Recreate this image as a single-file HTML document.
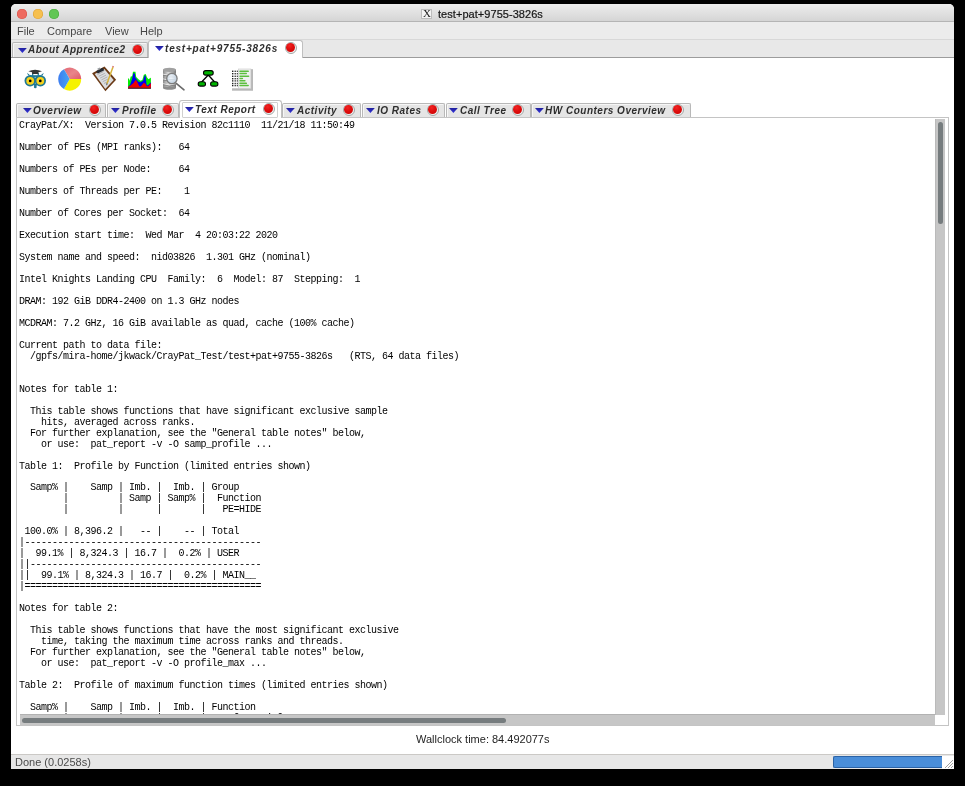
<!DOCTYPE html>
<html><head><meta charset="utf-8">
<style>
*{margin:0;padding:0;box-sizing:border-box}
html,body{width:965px;height:786px;overflow:hidden;background:#000}
body{position:relative;font-family:"Liberation Sans",sans-serif}
.a{will-change:transform}
.a{position:absolute}
#win{left:11px;top:4px;width:943px;height:765px;background:#ffffff;border-radius:5px 5px 0 0;overflow:hidden}
#title{left:11px;top:4px;width:943px;height:18px;background:linear-gradient(#ededed,#d5d5d5);border-bottom:1px solid #b5b5b5;border-radius:5px 5px 0 0}
.tl{width:9.6px;height:9.6px;border-radius:50%;top:8px}
#menu{left:11px;top:22px;width:943px;height:18px;background:#ececec;border-bottom:1px solid #d8d8d8}
.mi{top:25px;font-size:11px;color:#474747;line-height:13px;white-space:nowrap}
#tabs1{left:11px;top:40px;width:943px;height:18px;background:#e8e8e8;border-bottom:1px solid #9c9c9c}
.tab{background:#e5e5e5;border:1px solid #b8b8b8;border-bottom:none;border-radius:2px 2px 0 0;box-shadow:inset 1px 1px 0 #f6f6f6}
.tabsel{background:#fff;border:1px solid #c0c0c0;border-bottom:none;border-radius:3px 3px 0 0}
.tt{font-size:10px;letter-spacing:0.5px;font-weight:bold;font-style:italic;color:#2e2e2e;line-height:13px;white-space:nowrap}
.tri{width:8.8px;height:5.1px;background:linear-gradient(#20209c,#3434dc);clip-path:polygon(0 0,100% 0,50% 100%)}
.rc{width:12px;height:12px;border-radius:50%;border:1.2px solid #a2a6a4;background:#eef2f2}
.rc::after{content:'';position:absolute;left:0.3px;top:0.3px;width:9px;height:9px;border-radius:50%;background:radial-gradient(circle at 40% 30%,#f42424 0,#e01010 40%,#c80000 100%)}
pre{font-family:"Liberation Mono",monospace;font-size:10px;letter-spacing:-0.5px;line-height:10.98px;color:#000}
.sb{background:#c6c6c6}
.th{background:#767c7e;border-radius:3px}
</style></head><body>
<div id="win" class="a"></div>
<div id="title" class="a"></div>
<div class="a tl" style="left:17px;top:8.5px;background:#ee6b60;box-shadow:inset 0 0 0 0.6px #d9554b"></div>
<div class="a tl" style="left:32.8px;top:8.5px;background:#f6c04f;box-shadow:inset 0 0 0 0.6px #dca23c"></div>
<div class="a tl" style="left:48.6px;top:8.5px;background:#62c655;box-shadow:inset 0 0 0 0.6px #4aa93f"></div>
<div class="a" style="left:421px;top:9px;width:11px;height:10px;background:#f4f4f4;border:1px solid #bdbdbd"></div>
<div class="a" style="left:422px;top:7px;width:10px;font-family:'Liberation Serif',serif;font-size:11px;line-height:13px;color:#222;text-align:center">X</div>
<div class="a" style="left:438px;top:7.5px;font-size:11px;line-height:13px;color:#161616;-webkit-text-stroke:0.2px #161616;letter-spacing:0.05px;white-space:nowrap">test+pat+9755-3826s</div>
<div id="menu" class="a"></div>
<div class="a mi" style="left:16.7px">File</div>
<div class="a mi" style="left:46.7px">Compare</div>
<div class="a mi" style="left:104.9px">View</div>
<div class="a mi" style="left:139.8px">Help</div>
<div id="tabs1" class="a"></div>
<div class="a tab" style="left:12px;top:42px;width:136px;height:15px"></div>
<div class="a tri" style="left:18px;top:48px"></div>
<div class="a tt" style="left:28.3px;top:43.13px">About Apprentice2</div>
<div class="a rc" style="left:131.70px;top:44.00px"></div>
<div class="a tabsel" style="left:148px;top:40px;width:155px;height:18px"></div>
<div class="a tri" style="left:155px;top:46.2px"></div>
<div class="a tt" style="left:165px;top:41.93px;letter-spacing:0.8px">test+pat+9755-3826s</div>
<div class="a rc" style="left:284.60px;top:42.10px"></div>
<svg class="a" style="left:0;top:0" width="965" height="120" viewBox="0 0 965 120">
<defs>
<linearGradient id="gpr" x1="0" y1="0" x2="1" y2="1"><stop offset="0" stop-color="#e36a77"/><stop offset="0.5" stop-color="#e98589"/><stop offset="1" stop-color="#e05a6a"/></linearGradient>
<linearGradient id="gpb" x1="0" y1="0" x2="1" y2="0"><stop offset="0" stop-color="#3d7df0"/><stop offset="1" stop-color="#44a4f4"/></linearGradient>
<linearGradient id="gdb" x1="0" y1="0" x2="1" y2="0"><stop offset="0" stop-color="#8a8a8a"/><stop offset="0.4" stop-color="#d8d8d8"/><stop offset="1" stop-color="#7a7a7a"/></linearGradient>
<radialGradient id="glens" cx="0.4" cy="0.4" r="0.7"><stop offset="0" stop-color="#f4f8fc"/><stop offset="1" stop-color="#b8cadb"/></radialGradient>
</defs>
<!-- owl -->
<g>
<path d="M27 72.8 L28.2 75.5 L31 76 Z M43.8 72.8 L42.6 75.5 L39.8 76 Z" fill="#1f7894"/>
<rect x="32" y="73" width="1.3" height="3.5" fill="#1f7894"/>
<rect x="37.6" y="73" width="1.3" height="3.5" fill="#1f7894"/>
<circle cx="30.1" cy="80.8" r="5.6" fill="#1f7894"/>
<circle cx="40.4" cy="80.8" r="5.6" fill="#1f7894"/>
<rect x="30" y="75.2" width="10.5" height="4" fill="#1f7894"/>
<circle cx="35.3" cy="86.9" r="1.4" fill="#1f7894"/><path d="M32 83.5 L38.6 83.5 L35.3 87 Z" fill="#1f7894"/>
<circle cx="30.2" cy="80.8" r="3.9" fill="#f7d21a"/>
<circle cx="40.3" cy="80.8" r="3.9" fill="#f7d21a"/>
<circle cx="30.2" cy="80.9" r="1.35" fill="#000"/>
<circle cx="40.3" cy="80.9" r="1.35" fill="#000"/>
<path d="M28.3 71.3 Q35 68.2 42 71.3 L38.5 72.3 L38.3 74 L32.3 74 L32 72.3 Z" fill="#343434"/>
<circle cx="35.1" cy="77.3" r="0.5" fill="#fff"/>
</g>
<!-- pie -->
<g>
<path d="M69.7 79.1 L63.95 69.14 A11.5 11.5 0 0 1 81.2 79.1 Z" fill="url(#gpr)"/>
<path d="M69.7 79.1 L81.2 79.1 A11.5 11.5 0 0 1 63.95 89.06 Z" fill="#f5f200"/>
<path d="M69.7 79.1 L63.95 89.06 A11.5 11.5 0 0 1 63.95 69.14 Z" fill="url(#gpb)"/>
</g>
<!-- clipboard -->
<g>
<path d="M104.5 66.6 L116.1 79.8 L105.4 91.3 L92.1 73.3 Z" fill="#6a3915"/>
<path d="M104.3 69 L113.7 79.9 L105.3 88.9 L94.7 73.9 Z" fill="#dcdddf"/>
<path d="M97.5 74.5 L103.5 71.5 M98.8 76.3 L104.8 73.3 M100.1 78.1 L106.1 75.1 M101.4 79.9 L107.4 76.9 M102.7 81.7 L108.7 78.7 M104 83.5 L109 81" stroke="#9c9ea2" stroke-width="0.7"/>
<path d="M96 71.2 L102.6 67.8 L104.4 70.3 L97.8 73.6 Z" fill="#262b32"/>
<path d="M97.2 68.8 L99.8 67.4 L100.9 68.8 L98.3 70.2 Z" fill="#9a9ea2"/>
<path d="M112.2 67 L113.6 67.6 L107.7 83.8 L106.3 83.2 Z" fill="#d6b23a"/>
<path d="M106.3 83.2 L107.7 83.8 L106.6 85.6 Z" fill="#3a3a3a"/>
<path d="M112.2 67 L113.6 67.6 L114 66.4 L112.6 65.8 Z" fill="#d46060"/>
</g>
<!-- area chart -->
<g transform="translate(124 64) scale(0.03817)">
<path d="M105 640 L105 380 L130 380 L150 440 L175 330 L215 320 L235 200 L300 200 L320 340 L380 400 L430 440 L480 420 L520 280 L570 260 L600 350 L640 400 L700 360 L705 360 L705 640 Z" fill="#00ee00"/>
<path d="M105 640 L105 610 L165 530 L210 400 L245 240 L280 240 L300 360 L370 460 L430 480 L500 440 L540 300 L565 300 L590 540 L620 560 L705 480 L705 640 Z" fill="#0000f0"/>
<path d="M105 640 L105 600 L160 570 L250 500 L300 420 L330 440 L400 580 L440 590 L520 490 L560 520 L600 580 L640 580 L705 500 L705 640 Z" fill="#f00000"/>
<rect x="105" y="620" width="600" height="22" fill="#303030"/>
</g>
<!-- database + magnifier -->
<g>
<rect x="163" y="69.5" width="13" height="18.5" fill="url(#gdb)"/>
<ellipse cx="169.5" cy="88" rx="6.5" ry="1.8" fill="#8c8c8c"/>
<ellipse cx="169.5" cy="69.8" rx="6.5" ry="2.1" fill="#a0a0a0"/>
<path d="M163 74.2 Q169.5 76.7 176 74.2 M163 79 Q169.5 81.5 176 79 M163 83.8 Q169.5 86.3 176 83.8" stroke="#f2f2f2" stroke-width="0.9" fill="none"/>
<path d="M163 75.1 Q169.5 77.6 176 75.1 M163 79.9 Q169.5 82.4 176 79.9 M163 84.7 Q169.5 87.2 176 84.7" stroke="#6a6a6a" stroke-width="0.6" fill="none"/>
<path d="M176.2 83.3 L184 89.8" stroke="#6a6a6a" stroke-width="1.6" stroke-linecap="round"/>
<circle cx="171.9" cy="78.5" r="5.2" fill="url(#glens)" stroke="#7c7c7c" stroke-width="1.3"/>
<path d="M168 77 L176 77 M168.5 79.5 L175.5 79.5" stroke="#c6d0da" stroke-width="0.6"/>
</g>
<!-- tree -->
<g stroke="#000" stroke-width="1.1">
<path d="M208.3 75 L201.6 82 M208.3 75 L214.6 82" stroke-width="1.3"/>
<rect x="203.5" y="70.6" width="9.7" height="4.5" rx="2.2" fill="#00b400"/>
<rect x="198.2" y="81.8" width="7.3" height="4.3" rx="2.1" fill="#00b400"/>
<rect x="210.6" y="81.8" width="7.3" height="4.3" rx="2.1" fill="#00b400"/>
</g>
<!-- report list -->
<g>
<rect x="232" y="88.3" width="21" height="2.4" fill="#b8b8b8"/>
<rect x="250.8" y="69.2" width="2.2" height="21" fill="#b8b8b8"/>
<rect x="238.5" y="69" width="12.4" height="19.4" fill="#f0f0f0" stroke="#c8c8c8" stroke-width="0.6"/>
<g fill="#5cbf3e">
<rect x="239.3" y="70.6" width="9.6" height="1.5" rx="0.7"/>
<rect x="239.3" y="72.8" width="7.7" height="1.5" rx="0.7"/>
<rect x="239.3" y="75.4" width="10" height="1.6" rx="0.7"/>
<rect x="239.3" y="77.8" width="3.8" height="1.5" rx="0.7"/>
<rect x="239.3" y="80" width="6.3" height="1.5" rx="0.7"/>
<rect x="239.3" y="82.6" width="7.7" height="1.5" rx="0.7"/>
<rect x="239.3" y="84.7" width="9.6" height="1.5" rx="0.7"/>
</g>
<g fill="#222">
<rect x="232" y="70.6" width="1.4" height="1.4"/><rect x="234.6" y="70.6" width="1.2" height="1.4"/><rect x="236.8" y="70.6" width="1" height="1.4"/>
<rect x="232" y="73" width="1.4" height="1.4"/><rect x="234.6" y="73" width="1.2" height="1.4"/><rect x="236.8" y="73" width="1" height="1.4"/>
<rect x="232" y="75.6" width="1.4" height="1.4"/><rect x="234.6" y="75.6" width="1.2" height="1.4"/><rect x="236.8" y="75.6" width="1" height="1.4"/>
<rect x="232" y="78" width="1.4" height="1.4"/><rect x="234.6" y="78" width="1.2" height="1.4"/><rect x="236.8" y="78" width="1" height="1.4"/>
<rect x="232" y="80.2" width="1.4" height="1.4"/><rect x="234.6" y="80.2" width="1.2" height="1.4"/><rect x="236.8" y="80.2" width="1" height="1.4"/>
<rect x="232" y="82.8" width="1.4" height="1.4"/><rect x="234.6" y="82.8" width="1.2" height="1.4"/><rect x="236.8" y="82.8" width="1" height="1.4"/>
<rect x="232" y="84.9" width="1.4" height="1.4"/><rect x="234.6" y="84.9" width="1.2" height="1.4"/><rect x="236.8" y="84.9" width="1" height="1.4"/>
</g>
</g>
</svg>

<div class="a tab" style="left:16.4px;top:102.6px;width:90.4px;height:14.600000000000009px"></div>
<div class="a tri" style="left:22.9px;top:107.9px"></div>
<div class="a tt" style="left:32.7px;top:104.23px">Overview</div>
<div class="a rc" style="left:88.60px;top:104.30px"></div>
<div class="a tab" style="left:107px;top:102.6px;width:71.6px;height:14.600000000000009px"></div>
<div class="a tri" style="left:111.2px;top:107.9px"></div>
<div class="a tt" style="left:121.7px;top:104.23px">Profile</div>
<div class="a rc" style="left:161.80px;top:104.30px"></div>
<div class="a tab" style="left:282px;top:102.6px;width:79px;height:14.600000000000009px"></div>
<div class="a tri" style="left:286px;top:107.9px"></div>
<div class="a tt" style="left:296.6px;top:104.23px">Activity</div>
<div class="a rc" style="left:343.30px;top:104.30px"></div>
<div class="a tab" style="left:362px;top:102.6px;width:83.39999999999998px;height:14.600000000000009px"></div>
<div class="a tri" style="left:366px;top:107.9px"></div>
<div class="a tt" style="left:376.6px;top:104.23px">IO Rates</div>
<div class="a rc" style="left:426.70px;top:104.30px"></div>
<div class="a tab" style="left:445.6px;top:102.6px;width:84.60000000000002px;height:14.600000000000009px"></div>
<div class="a tri" style="left:449.3px;top:107.9px"></div>
<div class="a tt" style="left:459.6px;top:104.23px">Call Tree</div>
<div class="a rc" style="left:511.90px;top:104.30px"></div>
<div class="a tab" style="left:530.6px;top:102.6px;width:160.39999999999998px;height:14.600000000000009px"></div>
<div class="a tri" style="left:535px;top:107.9px"></div>
<div class="a tt" style="left:545.3px;top:104.23px">HW Counters Overview</div>
<div class="a rc" style="left:672.00px;top:104.30px"></div>
<div class="a" style="left:15.6px;top:117.2px;width:933.4px;height:609px;border:1px solid #c4c4c4;border-width:1.4px 1px 1.2px 1.4px"></div>
<div class="a" style="left:180.2px;top:116.6px;width:100.5px;height:2.2px;background:#fff"></div>
<div class="a tabsel" style="left:178.9px;top:100.3px;width:102.9px;height:18.4px"></div>
<div class="a" style="left:182.4px;top:101.9px;width:96.4px;height:15.6px;border:1px solid #d0d0d0;border-radius:1px"></div>
<div class="a tri" style="left:185.2px;top:106.6px"></div>
<div class="a tt" style="left:195px;top:102.6px">Text Report</div>
<div class="a rc" style="left:263.4px;top:102.85px"></div>
<pre class="a" id="txt" style="left:19.1px;top:119.7px;width:914px;height:595px;overflow:hidden">CrayPat/X:  Version 7.0.5 Revision 82c1110  11/21/18 11:50:49

Number of PEs (MPI ranks):   64

Numbers of PEs per Node:     64

Numbers of Threads per PE:    1

Number of Cores per Socket:  64

Execution start time:  Wed Mar  4 20:03:22 2020

System name and speed:  nid03826  1.301 GHz (nominal)

Intel Knights Landing CPU  Family:  6  Model: 87  Stepping:  1

DRAM: 192 GiB DDR4-2400 on 1.3 GHz nodes

MCDRAM: 7.2 GHz, 16 GiB available as quad, cache (100% cache)

Current path to data file:
  /gpfs/mira-home/jkwack/CrayPat_Test/test+pat+9755-3826s   (RTS, 64 data files)


Notes for table 1:

  This table shows functions that have significant exclusive sample
    hits, averaged across ranks.
  For further explanation, see the "General table notes" below,
    or use:  pat_report -v -O samp_profile ...

Table 1:  Profile by Function (limited entries shown)

  Samp% |    Samp | Imb. |  Imb. | Group
        |         | Samp | Samp% |  Function
        |         |      |       |   PE=HIDE

 100.0% | 8,396.2 |   -- |    -- | Total
|-------------------------------------------
|  99.1% | 8,324.3 | 16.7 |  0.2% | USER
||------------------------------------------
||  99.1% | 8,324.3 | 16.7 |  0.2% | MAIN__
|===========================================

Notes for table 2:

  This table shows functions that have the most significant exclusive
    time, taking the maximum time across ranks and threads.
  For further explanation, see the "General table notes" below,
    or use:  pat_report -v -O profile_max ...

Table 2:  Profile of maximum function times (limited entries shown)

  Samp% |    Samp | Imb. |  Imb. | Function
        |         | Samp | Samp% |  PE=[max,min]</pre>
<div class="a sb" style="left:935px;top:119px;width:10px;height:596px;border-left:1px solid #bababa"></div>
<div class="a th" style="left:938.3px;top:121.8px;width:5px;height:101.5px"></div>
<div class="a sb" style="left:19.6px;top:714.2px;width:915.4px;height:11px;border-top:1px solid #b2b2b2"></div>
<div class="a th" style="left:22.1px;top:717.8px;width:483.7px;height:4.5px"></div>
<div class="a" style="left:416px;top:732.5px;font-size:11px;line-height:13px;color:#1e1e1e;white-space:nowrap">Wallclock time: 84.492077s</div>
<div class="a" style="left:11px;top:754px;width:943px;height:15px;background:#e7e7e7;border-top:1.6px solid #cbc9c6"></div>
<div class="a" style="left:15px;top:755.6px;font-size:11px;line-height:13px;color:#4a4a4a;white-space:nowrap">Done (0.0258s)</div>
<div class="a" style="left:833.1px;top:756.1px;width:109.6px;height:11.6px;background:#4a8ed9;border:1px solid #2b63a6;border-right:none;border-radius:2px 0 0 2px"></div>
<div class="a" style="left:942.3px;top:756px;width:11.7px;height:12.7px;background:#fff"></div>
<svg class="a" style="left:942px;top:756px" width="12" height="13"><path d="M3 12 L11 4 M6 12 L11 7 M9 12 L11 10" stroke="#8a8a8a" stroke-width="0.8"/></svg>
</body></html>
